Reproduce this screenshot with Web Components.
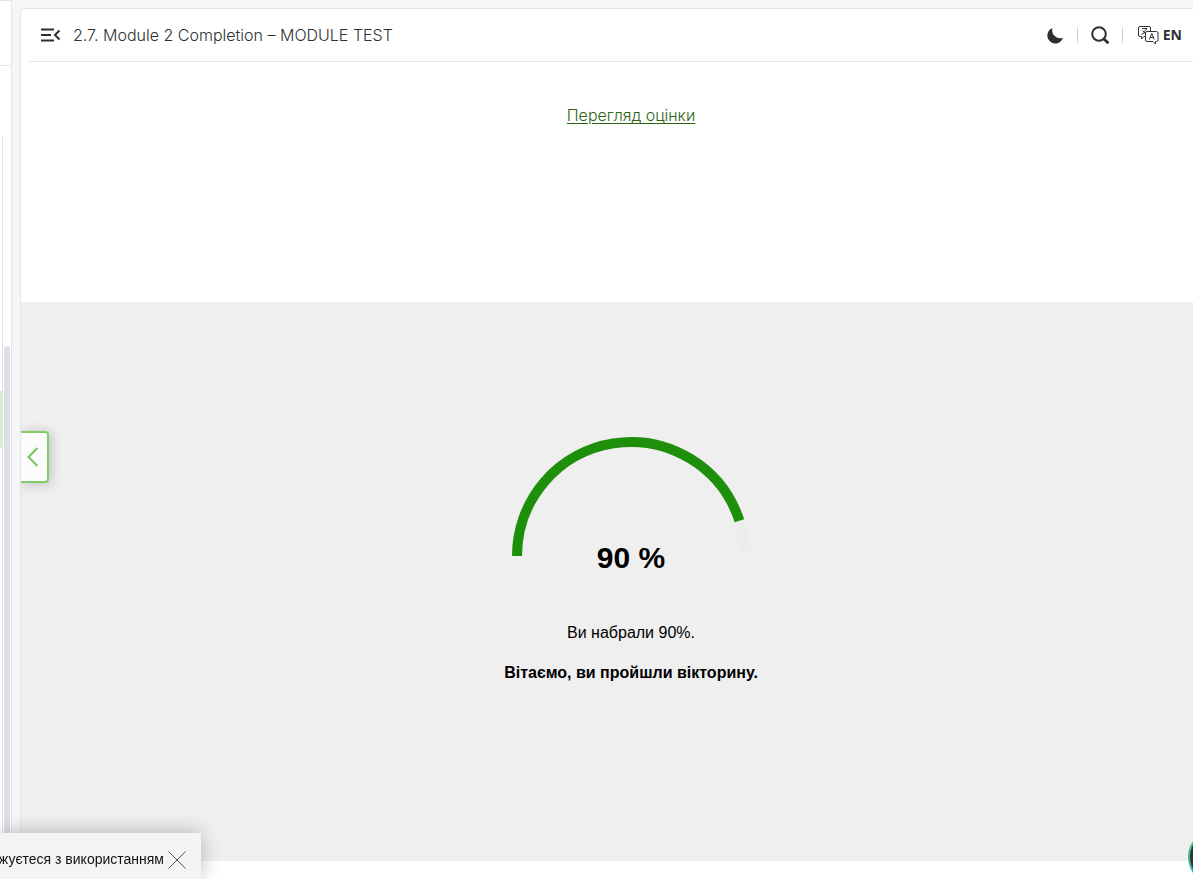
<!DOCTYPE html>
<html lang="uk">
<head>
<meta charset="utf-8">
<title>Module 2 Completion</title>
<style>
body { margin: 0; background: #f4f6f8; font-family: Inter, "Liberation Sans", sans-serif; font-size: 16px; color: #000; overflow: hidden; }
</style>
</head>
<body>
<course-app>
  <course-sidebar slot="sidebar"></course-sidebar>
  <lesson-header slot="main">2.7. Module 2 Completion – MODULE TEST</lesson-header>
  <review-panel slot="main">Перегляд оцінки</review-panel>
  <quiz-result slot="main" value="90">
    <span slot="score">Ви набрали 90%.</span>
    <span slot="message">Вітаємо, ви пройшли вікторину.</span>
  </quiz-result>
</course-app>
<sidebar-toggle></sidebar-toggle>
<cookie-notice>жуєтеся з використанням</cookie-notice>
<assist-button></assist-button>

<script>
class BaseElement extends HTMLElement {
  connectedCallback() {
    if (this.shadowRoot) return;
    this.attachShadow({ mode: "open" }).innerHTML = "<style>:host,*{box-sizing:border-box}button{font:inherit;color:inherit;background:none;border:0;padding:0;margin:0;cursor:pointer}svg{display:block}</style>" + this.view();
  }
}

customElements.define("course-app", class extends BaseElement {
  view() {
    return `<style>
      :host { display: grid; grid-template-columns: 12px minmax(0, 1fr); column-gap: 8px; height: 100vh; }
      main { margin-top: 8px; background: #fff; border: 1px solid #e3e5e7; border-width: 1px 0 0 1px; border-radius: 5px 0 0 0; overflow: hidden; }
    </style><slot name="sidebar"></slot><main><slot name="main"></slot></main>`;
  }
});

customElements.define("course-sidebar", class extends BaseElement {
  view() {
    return `<style>
      :host { display: flex; flex-direction: column; background: #fff; border-right: 1px solid #e3e5e7; overflow: hidden; }
      .top { flex: none; height: 66px; border: 1px solid #e3e5e7; border-width: 1px 0; }
      .list { flex: 1; margin-top: 70px; display: grid; grid-template-columns: 3px 1fr; column-gap: 1px; }
      .items { border-right: 1px solid #e3e5e7; padding-top: 255px; }
      .active { height: 57px; background: #d3efc8; border-radius: 0 0 3px 0; }
      .thumb { margin: 210px 1px 0 0; background: #dce0e5; border-radius: 3px 3px 0 0; }
    </style><div class="top"></div><div class="list"><div class="items"><div class="active"></div></div><div class="thumb"></div></div>`;
  }
});

customElements.define("lesson-header", class extends BaseElement {
  view() {
    return `<style>
      :host { display: flex; align-items: center; height: 53px; margin-left: 8px; padding: 0 11px 0 12px; border-bottom: 1px solid #e6e7e8; color: #2d3033; }
      h1 { flex: 1; margin: 0 0 0 12px; font-size: 16px; font-weight: 300; line-height: 24px; white-space: nowrap; }
      .tools { display: flex; align-items: center; }
      i { width: 1px; height: 16px; background: #cfcfcf; }
      .moon { margin-right: 13px; }
      .search { margin: 0 13px; }
      .lang { display: flex; align-items: center; gap: 4px; margin-left: 15px; font: 700 14px/20px "Noto Sans", sans-serif; }
    </style>
    <button aria-label="Menu"><svg width="20" height="14" viewBox="0 0 20 14" fill="none" stroke="currentColor" stroke-width="2"><path d="M0 1.500h13M0 7h10M0 12.500h13"/><path d="M18.500 2.500 14 7l4.500 4.500"/></svg></button>
    <h1><slot></slot></h1>
    <div class="tools">
      <button class="moon" aria-label="Theme"><svg width="17" height="17" viewBox="0 0 17 17"><path fill="#2f2f2f" d="M5.500 1A8 8 0 1 0 16 10.800 8.100 8.100 0 0 1 5.500 1Z"/></svg></button><i></i>
      <button class="search" aria-label="Search"><svg width="18" height="18" viewBox="0 0 18 18" fill="none" stroke="#2f2f2f"><circle cx="8" cy="8" r="6.800" stroke-width="2"/><path d="m13 13 3.600 3.400" stroke-width="2.800" stroke-linecap="round"/></svg></button><i></i>
      <button class="lang"><svg width="21" height="19" viewBox="0 0 21 19" fill="none" stroke="#333" stroke-width="1"><path d="M7.500 10.500H5.800L3.500 13v-2.500H2A1.500 1.500 0 0 1 .5 9V2A1.500 1.500 0 0 1 2 .5h9A1.500 1.500 0 0 1 12.500 2v3.500M9 5.500h9.500A1.500 1.500 0 0 1 20 7v7a1.500 1.500 0 0 1-1.500 1.500h-1V18L15 15.500H9A1.500 1.500 0 0 1 7.500 14V7A1.500 1.500 0 0 1 9 5.500Z"/><path d="M4 2.500h5L5.500 6.300M4.500 4.500 8 8M3.500 8.500 7 6.500M11.300 13.500l2.500-6 2.500 6M12.200 11.500h3.200"/></svg>EN</button>
    </div>`;
  }
});

customElements.define("review-panel", class extends BaseElement {
  view() {
    return `<style>
      :host { display: block; height: 240px; padding: 41px 0 0 48px; text-align: center; line-height: 24px; }
      a { color: #2c6415; font-weight: 300; text-decoration: underline; text-underline-offset: 2px; }
    </style><a href="#review"><slot></slot></a>`;
  }
});

customElements.define("quiz-result", class extends BaseElement {
  view() {
    const value = Number(this.getAttribute("value"));
    const radius = 114, angle = Math.PI * (1 - value / 100);
    const x = 120 + radius * Math.cos(angle), y = 120 - radius * Math.sin(angle);
    return `<style>
      :host { display: flex; flex-direction: column; align-items: center; height: 559px; padding: 134px 0 0 48px; background: #efefef; text-align: center; line-height: 24px; font-family: "Liberation Sans", sans-serif; }
      output { margin-top: -18px; font-size: 30px; font-weight: 700; line-height: 40px; }
      p { margin: 16px 0 0; }
      .score { margin-top: 43px; }
      .message { font-weight: 700; }
    </style>
    <svg width="240" height="120" viewBox="0 0 240 120" fill="none" stroke-width="10">
      <path stroke="#ededed" d="M${x} ${y}A${radius} ${radius} 0 0 1 234 120"/>
      <path stroke="#1d8f0b" d="M6 120A${radius} ${radius} 0 0 1 ${x} ${y}"/>
    </svg>
    <output>${value} %</output>
    <p class="score"><slot name="score"></slot></p>
    <p class="message"><slot name="message"></slot></p>`;
  }
});

customElements.define("sidebar-toggle", class extends BaseElement {
  view() {
    return `<style>
      :host { position: fixed; left: 21px; top: calc(50% - 9px); }
      button { display: grid; place-items: center; width: 28px; height: 52px; padding-right: 2px; background: #fcfcfc; border: 2px solid #84cb6b; border-left: 0; border-radius: 0 4px 4px 0; box-shadow: 2px 1px 12px #0003; clip-path: inset(-20px -20px -20px 0); }
    </style><button aria-label="Toggle sidebar"><svg width="12" height="20" viewBox="0 0 12 20" fill="none" stroke="#75c45b" stroke-width="2"><path d="M10.500 1 1.500 10l9 9"/></svg></button>`;
  }
});

customElements.define("cookie-notice", class extends BaseElement {
  view() {
    return `<style>
      :host { position: fixed; left: 0; bottom: 0; display: flex; align-items: center; justify-content: flex-end; gap: 4px; width: 201px; height: 46px; padding: 8px 15px 0 0; background: #f3f4f6; box-shadow: 0 0 20px #0004; color: #111; font: 14px/20px "Liberation Sans", sans-serif; white-space: nowrap; }
      span { padding-bottom: 2px; }
    </style><span><slot></slot></span><button aria-label="Close"><svg width="18" height="18" viewBox="0 0 18 18" stroke="#555"><path d="M.5.5l17 17m0-17-17 17"/></svg></button>`;
  }
});

customElements.define("assist-button", class extends BaseElement {
  view() {
    return `<style>
      :host { position: fixed; right: -51px; bottom: -8px; }
      button { width: 56px; height: 56px; border: 2px solid transparent; border-radius: 50%; background: linear-gradient(#333, #333) padding-box, linear-gradient(#58b947, #20b5d8) border-box; }
    </style><button aria-label="Assistant"></button>`;
  }
});
</script>
</body>
</html>
